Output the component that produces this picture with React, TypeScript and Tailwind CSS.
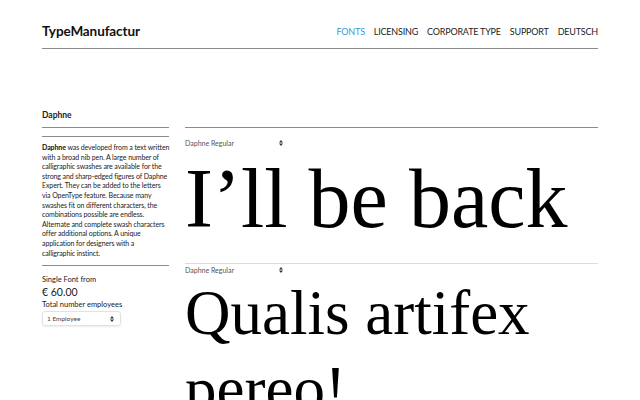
import React from "react";

const nav = ["FONTS", "LICENSING", "CORPORATE TYPE", "SUPPORT", "DEUTSCH"];

const desc = [
  "was developed from a text written",
  "with a broad nib pen. A large number of",
  "calligraphic swashes are available for the",
  "strong and sharp-edged figures of Daphne",
  "Expert. They can be added to the letters",
  "via OpenType feature. Because many",
  "swashes fit on different characters, the",
  "combinations possible are endless.",
  "Alternate and complete swash characters",
  "offer additional options. A unique",
  "application for designers with a",
  "calligraphic instinct.",
];

function UpDown({ className = "" }: { className?: string }) {
  return (
    <svg width="4" height="6" viewBox="0 0 4 6" className={className}>
      <path d="M2 0 L4 2.4 H0 Z M2 6 L4 3.6 H0 Z" fill="#333" />
    </svg>
  );
}

function StyleSelect() {
  return (
    <div className="flex items-center w-[98px] justify-between text-[7px] leading-[10px] text-[#555]">
      <span>Daphne Regular</span>
      <UpDown />
    </div>
  );
}

export default function App() {
  return (
    <div className="w-[640px] h-[400px] overflow-hidden bg-white text-[#222] font-['Lato','Open_Sans',sans-serif]">
      <div className="mx-[42px]">
        {/* header */}
        <header className="h-[49px] flex items-end justify-between border-b border-[#8c8c8c] pb-[9px]">
          <span className="text-[13.5px] font-bold leading-[16px] tracking-[-0.1px] text-[#111]">TypeManufactur</span>
          <nav className="flex gap-[9px] text-[9px] leading-[14px] tracking-[-0.2px] text-[#222]">
            {nav.map((n, i) => (
              <span key={n} className={i === 0 ? "text-[#3a98d8]" : ""}>{n}</span>
            ))}
          </nav>
        </header>

        <div className="flex gap-[16px] pt-[59px]">
          {/* sidebar */}
          <aside className="w-[127px] shrink-0">
            <div className="h-[20px] border-b border-[#8c8c8c] text-[8.5px] font-bold leading-[14px]">Daphne</div>
            <div className="mt-[8px] border-t border-b border-[#8c8c8c] pt-[6px] pb-[7px] text-[7px] tracking-[-0.1px] leading-[9.6px] whitespace-nowrap text-[#222]">
              {desc.map((l, i) => (
                <div key={i}>
                  {i === 0 && <b className="text-[#111]">Daphne </b>}
                  {l}
                </div>
              ))}
            </div>
            <div className="mt-[9px] text-[7.5px] leading-[10px]">Single Font from</div>
            <div className="text-[10.5px] leading-[15px]">€ 60.00</div>
            <div className="text-[7.5px] leading-[10px]">Total number employees</div>
            <div className="mt-[1px] w-[79px] h-[15px] flex items-center justify-between px-[4px] pr-[6px] rounded-[3px] border border-[#e2e2e2] shadow-[0_1px_2px_rgba(0,0,0,0.08)] text-[6.5px] text-[#444]">
              <span>1 Employee</span>
              <UpDown />
            </div>
          </aside>

          {/* main */}
          <main className="flex-1 mt-[19px] border-t border-[#8c8c8c]">
            <div className="border-b border-[#dcdcdc] pb-[18px]">
              <div className="pt-[10px]">
                <StyleSelect />
              </div>
              <div className="mt-[5px] text-[84px] leading-[1.1] text-black font-['Liberation_Serif',serif]">
                I’ll be back
              </div>
            </div>
            <div className="pt-[1px]">
              <StyleSelect />
              <div className="mt-[1px] text-[63px] leading-[1.2] text-black font-['Liberation_Serif',serif]">
                Qualis artifex pereo!
              </div>
            </div>
          </main>
        </div>
      </div>
    </div>
  );
}
